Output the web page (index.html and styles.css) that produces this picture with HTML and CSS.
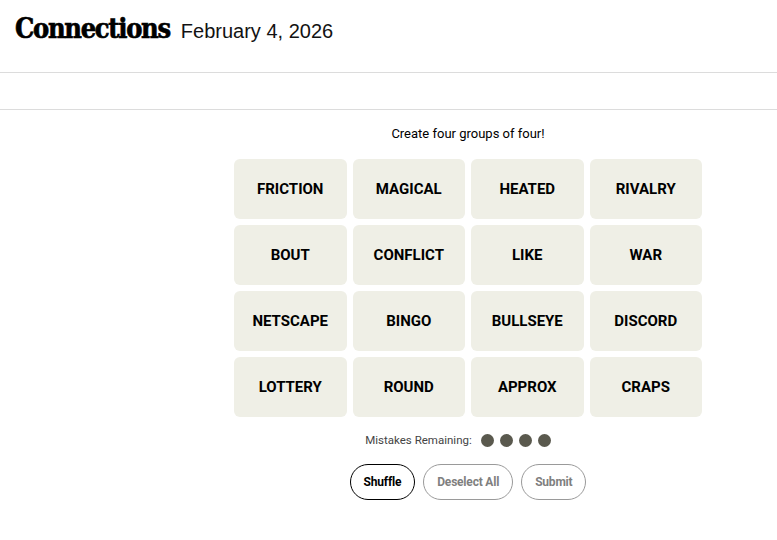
FILE: index.html
```
<!DOCTYPE html>
<html>
<head>
<meta charset="utf-8">
<link rel="stylesheet" href="styles.css">
</head>
<body>
<header class="header">
  <h1 class="title">Connections</h1>
  <span class="date">February 4, 2026</span>
</header>
<div class="toolbar"></div>
<main class="game">
  <p class="prompt">Create four groups of four!</p>
  <div class="grid">
    <div class="tile">FRICTION</div>
    <div class="tile">MAGICAL</div>
    <div class="tile">HEATED</div>
    <div class="tile">RIVALRY</div>
    <div class="tile">BOUT</div>
    <div class="tile">CONFLICT</div>
    <div class="tile">LIKE</div>
    <div class="tile">WAR</div>
    <div class="tile">NETSCAPE</div>
    <div class="tile">BINGO</div>
    <div class="tile">BULLSEYE</div>
    <div class="tile">DISCORD</div>
    <div class="tile">LOTTERY</div>
    <div class="tile">ROUND</div>
    <div class="tile">APPROX</div>
    <div class="tile">CRAPS</div>
  </div>
  <div class="mistakes">
    <span class="mistakes-label">Mistakes Remaining:</span>
    <span class="dots"><i class="dot"></i><i class="dot"></i><i class="dot"></i><i class="dot"></i></span>
  </div>
  <div class="actions">
    <button class="btn btn-active">Shuffle</button>
    <button class="btn">Deselect All</button>
    <button class="btn">Submit</button>
  </div>
</main>
</body>
</html>
```
FILE: styles.css
```
* { box-sizing: border-box; }
html, body { margin: 0; padding: 0; background: #fff; }
body { font-family: Roboto, "Liberation Sans", sans-serif; color: #000; }

.header {
  height: 73px;
  border-bottom: 1px solid #dcdcdc;
  display: flex;
  align-items: baseline;
  padding: 13px 0 0 15px;
  gap: 11px;
}
.title {
  margin: 0;
  font-family: "DejaVu Serif Condensed", "DejaVu Serif", serif;
  font-weight: 900;
  font-size: 27px;
  letter-spacing: -1.3px;
  -webkit-text-stroke: 0.6px #000;
}
.date {
  font-family: "Liberation Sans", Arial, sans-serif;
  font-size: 20px;
  font-weight: 400;
  color: #121212;
}
.toolbar {
  height: 37px;
  border-bottom: 1px solid #dcdcdc;
}
.game {
  width: 468px;
  margin-left: 234px;
  display: flex;
  flex-direction: column;
  align-items: center;
}
.prompt {
  margin: 14px 0 0;
  font-family: Roboto, "Liberation Sans", sans-serif;
  font-size: 13px;
  height: 21px;
  line-height: 20px;
}
.grid {
  margin-top: 14px;
  width: 468px;
  display: grid;
  grid-template-columns: repeat(4, 1fr);
  grid-auto-rows: 60px;
  gap: 6px;
}
.tile {
  background: #efefe6;
  border-radius: 6px;
  display: flex;
  align-items: center;
  justify-content: center;
  font-family: Roboto, "Liberation Sans", sans-serif;
  font-weight: 700;
  font-size: 15px;
  color: #000;
}
.mistakes {
  margin-top: 16px;
  display: flex;
  align-items: center;
  gap: 9px;
  height: 14px;
  margin-right: 20px;
}
.mistakes-label {
  font-family: Roboto, "Liberation Sans", sans-serif;
  font-size: 11.5px;
  color: #444;
}
.dots { display: flex; gap: 6px; }
.dot {
  width: 13px;
  height: 13px;
  border-radius: 50%;
  background: #5a594e;
  display: block;
}
.actions {
  margin-top: 17px;
  display: flex;
  gap: 8px;
}
.btn {
  height: 36px;
  padding: 0 13px;
  border-radius: 18px;
  border: 1px solid #9a9a9a;
  background: #fff;
  color: #7f7f7f;
  font-family: Roboto, "Liberation Sans", sans-serif;
  font-weight: 700;
  font-size: 12px;
  letter-spacing: -0.2px;
}
.btn-active {
  border-color: #000;
  color: #000;
}
```
